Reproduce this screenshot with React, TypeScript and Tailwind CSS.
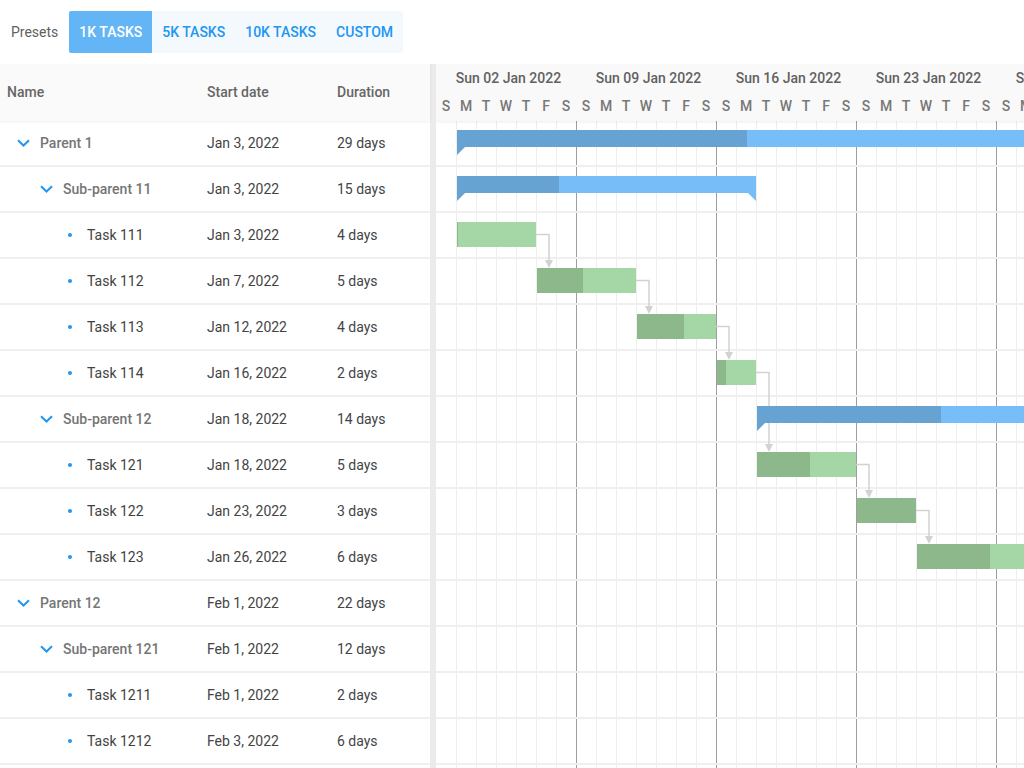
import React from 'react';

type Bar = { kind: 'parent' | 'task'; start: number; days: number; pct: number };
type Row = { name: string; level: 0 | 1 | 2; start: string; duration: string; bar?: Bar };

const rows: Row[] = [
    { name: 'Parent 1', level: 0, start: 'Jan 3, 2022', duration: '29 days', bar: { kind: 'parent', start: 1, days: 29, pct: 50 } },
    { name: 'Sub-parent 11', level: 1, start: 'Jan 3, 2022', duration: '15 days', bar: { kind: 'parent', start: 1, days: 15, pct: 34 } },
    { name: 'Task 111', level: 2, start: 'Jan 3, 2022', duration: '4 days', bar: { kind: 'task', start: 1, days: 4, pct: 1 } },
    { name: 'Task 112', level: 2, start: 'Jan 7, 2022', duration: '5 days', bar: { kind: 'task', start: 5, days: 5, pct: 46 } },
    { name: 'Task 113', level: 2, start: 'Jan 12, 2022', duration: '4 days', bar: { kind: 'task', start: 10, days: 4, pct: 59 } },
    { name: 'Task 114', level: 2, start: 'Jan 16, 2022', duration: '2 days', bar: { kind: 'task', start: 14, days: 2, pct: 23 } },
    { name: 'Sub-parent 12', level: 1, start: 'Jan 18, 2022', duration: '14 days', bar: { kind: 'parent', start: 16, days: 14, pct: 66 } },
    { name: 'Task 121', level: 2, start: 'Jan 18, 2022', duration: '5 days', bar: { kind: 'task', start: 16, days: 5, pct: 54 } },
    { name: 'Task 122', level: 2, start: 'Jan 23, 2022', duration: '3 days', bar: { kind: 'task', start: 21, days: 3, pct: 100 } },
    { name: 'Task 123', level: 2, start: 'Jan 26, 2022', duration: '6 days', bar: { kind: 'task', start: 24, days: 6, pct: 61 } },
    { name: 'Parent 12', level: 0, start: 'Feb 1, 2022', duration: '22 days' },
    { name: 'Sub-parent 121', level: 1, start: 'Feb 1, 2022', duration: '12 days' },
    { name: 'Task 1211', level: 2, start: 'Feb 1, 2022', duration: '2 days' },
    { name: 'Task 1212', level: 2, start: 'Feb 3, 2022', duration: '6 days' },
    { name: '', level: 2, start: '', duration: '' },
];

// predecessor row -> successor row
const deps: [number, number][] = [[2, 3], [3, 4], [4, 5], [5, 7], [7, 8], [8, 9]];

const DAY = 20;
const ROW = 46;
const BAR_TOP = 9;
const days = Array.from({ length: 30 }, (_, i) => 'SMTWTFS'[i % 7]);
const weeks = ['Sun 02 Jan 2022', 'Sun 09 Jan 2022', 'Sun 16 Jan 2022', 'Sun 23 Jan 2022', 'Sun 30 Jan 2022'];

const indent = ['pl-[12px]', 'pl-[35px]', 'pl-[58px]'];

const Chevron = () => (
    <svg width="13" height="8" viewBox="0 0 13 8" fill="none">
        <path d="M1 1.2l5.5 5.3L12 1.2" stroke="#2196f3" strokeWidth="2" />
    </svg>
);

const Toolbar = () => (
    <div className="h-16 shrink-0 flex items-center pl-[11px] gap-[11px]">
        <span className="text-[14px] text-[#616161]">Presets</span>
        <div className="flex h-[42px] rounded-[2px] overflow-hidden bg-[#f4f9fe] text-[14px] font-medium">
            <button className="px-[10px] uppercase bg-[#64b5f6] text-white">1K tasks</button>
            <button className="px-[10px] uppercase text-[#2196f3]">5K tasks</button>
            <button className="px-[10px] uppercase text-[#2196f3]">10K tasks</button>
            <button className="px-[10px] uppercase text-[#2196f3]">Custom</button>
        </div>
    </div>
);

const TreeGrid = () => (
    <div className="w-[430px] shrink-0 flex flex-col">
        <div className="relative z-10 h-[57px] shrink-0 flex items-center bg-[#fafafa] shadow-[0_1px_3px_rgba(0,0,0,0.07)] text-[14px] font-medium text-[#666]">
            <div className="w-[200px] pl-[7px]">Name</div>
            <div className="w-[130px] pl-[7px]">Start date</div>
            <div className="flex-1 pl-[7px]">Duration</div>
        </div>
        {rows.map((r, i) => (
            <div key={i} className="h-[46px] shrink-0 flex items-center border-b-2 border-[#efefef] text-[14px]">
                <div className={`w-[200px] flex items-center ${indent[r.level]}`}>
                    {r.name && (
                        <>
                            <div className="w-[23px] flex justify-center">
                                {r.level < 2 ? <Chevron /> : <span className="block w-[4px] h-[4px] rounded-full bg-[#2196f3]" />}
                            </div>
                            <span className={r.level < 2 ? 'ml-[5px] font-medium text-[#757575]' : 'ml-[6px] text-[#424242]'}>{r.name}</span>
                        </>
                    )}
                </div>
                <div className="w-[130px] pl-[7px] text-[#444]">{r.start}</div>
                <div className="flex-1 pl-[7px] text-[#444]">{r.duration}</div>
            </div>
        ))}
    </div>
);

const TaskBar: React.FC<{ bar: Bar; row: number }> = ({ bar, row }) => {
    const left = bar.start * DAY + 1;
    const width = bar.days * DAY - 1;
    const top = row * ROW + BAR_TOP;
    if (bar.kind === 'task') {
        return (
            <div className="absolute h-[25px] flex bg-[#a5d7a6]" style={{ left, top, width }}>
                <div className="h-full bg-[#8cb88b]" style={{ width: `${bar.pct}%` }} />
            </div>
        );
    }
    return (
        <div className="absolute h-[17px]" style={{ left, top, width }}>
            <div className="h-full flex bg-[#77bdf7]">
                <div className="h-full bg-[#66a3d3]" style={{ width: `${bar.pct}%` }} />
            </div>
            <svg className="absolute left-0 top-[17px]" width="8" height="8" viewBox="0 0 8 8">
                <polygon points="0,0 8,0 0,8" fill="#66a3d3" />
            </svg>
            <svg className="absolute right-0 top-[17px]" width="8" height="8" viewBox="0 0 8 8">
                <polygon points="0,0 8,0 8,8" fill="#77bdf7" />
            </svg>
        </div>
    );
};

const Timeline = () => (
    <div className="flex-1 overflow-hidden flex flex-col">
        <div className="relative z-10 h-[57px] shrink-0 w-[600px] bg-[#f9f9f9] shadow-[0_1px_3px_rgba(0,0,0,0.07)] flex flex-col">
            <div className="h-[28px] flex items-center">
                {weeks.map((w) => (
                    <div key={w} className="w-[140px] shrink-0 text-center whitespace-nowrap text-[14px] font-medium text-[#616161] pl-[5px]">{w}</div>
                ))}
            </div>
            <div className="h-[29px] flex items-center">
                {days.map((d, i) => (
                    <div key={i} className="w-[20px] shrink-0 text-center text-[14px] font-medium text-[#777]">{d}</div>
                ))}
            </div>
        </div>
        <div className="relative w-[600px] flex-1">
            <div className="absolute inset-0 flex">
                {days.map((_, i) => (
                    <div key={i} className={`w-[20px] shrink-0 h-full ${i === 0 ? '' : 'border-l'} ${i % 7 === 0 ? 'border-[#9e9e9e]' : 'border-[#eeeeee]'}`} />
                ))}
            </div>
            <div className="relative flex flex-col">
                {rows.map((_, i) => (
                    <div key={i} className="h-[46px] shrink-0 border-b-2 border-[#efefef]" />
                ))}
            </div>
            <svg className="absolute left-0 top-0" width="600" height={rows.length * ROW}>
                {deps.map(([a, b]) => {
                    const ba = rows[a].bar!;
                    const x1 = (ba.start + ba.days) * DAY;
                    const y1 = a * ROW + BAR_TOP + 12.5;
                    const x2 = x1 + 13;
                    const y2 = b * ROW + BAR_TOP;
                    return (
                        <g key={`${a}-${b}`}>
                            <path d={`M${x1} ${y1}H${x2}V${y2 - 7}`} stroke="#d2d2d2" strokeWidth="1.5" fill="none" />
                            <polygon points={`${x2 - 4},${y2 - 8} ${x2 + 4},${y2 - 8} ${x2},${y2}`} fill="#d2d2d2" />
                        </g>
                    );
                })}
            </svg>
            {rows.map((r, i) => (r.bar ? <TaskBar key={i} bar={r.bar} row={i} /> : null))}
        </div>
    </div>
);

const App: React.FC = () => (
    <div className="h-screen w-full overflow-hidden bg-white flex flex-col font-['Roboto',sans-serif]">
        <Toolbar />
        <div className="flex-1 flex overflow-hidden">
            <TreeGrid />
            <div className="w-[6px] shrink-0 bg-[#ebebeb]" />
            <Timeline />
        </div>
    </div>
);

export default App;
